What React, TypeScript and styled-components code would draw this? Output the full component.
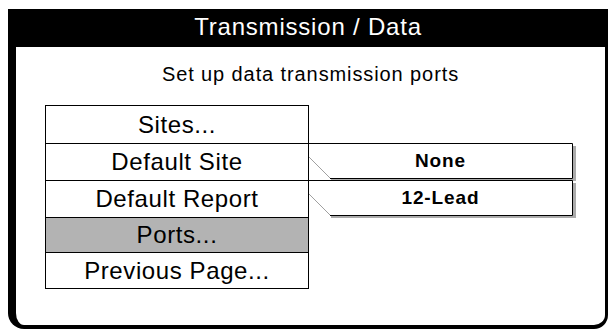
import styled, { createGlobalStyle } from "styled-components";

const GlobalStyle = createGlobalStyle`
  html, body {
    margin: 0;
    padding: 0;
    background: #fff;
  }
  body {
    font-family: "Liberation Sans", Arial, Helvetica, sans-serif;
    color: #000;
  }
`;

type MenuEntry = {
  label: string;
  height: number;
  selected?: boolean;
  value?: string;
};

const entries: MenuEntry[] = [
  { label: "Sites...", height: 39 },
  { label: "Default Site", height: 38, value: "None" },
  { label: "Default Report", height: 38, value: "12-Lead" },
  { label: "Ports...", height: 36, selected: true },
  { label: "Previous Page...", height: 37 },
];

function Callout({ value }: { value: string }) {
  return (
    <CalloutBox>
      <svg width="268" height="38" viewBox="0 0 268 38">
        <rect x="265" y="3" width="3" height="35" fill="#ababab" />
        <rect x="23" y="36" width="245" height="2" fill="#ababab" />
        <path d="M0 0.5H264.5V35.5H22" fill="none" stroke="#000" strokeWidth="1" />
        <path d="M1 14L22 35" fill="none" stroke="#a0a0a0" strokeWidth="1" />
      </svg>
      <CalloutText>{value}</CalloutText>
    </CalloutBox>
  );
}

function App() {
  return (
    <Screen>
      <GlobalStyle />
      <TitleBar>Transmission / Data</TitleBar>
      <Panel>
        <Subtitle>Set up data transmission ports</Subtitle>
        <Menu>
          {entries.map((e, i) => (
            <Row key={e.label} $first={i === 0}>
              <MenuItem $selected={!!e.selected} style={{ height: e.height }}>
                {e.label}
              </MenuItem>
              {e.value && <Callout value={e.value} />}
            </Row>
          ))}
        </Menu>
      </Panel>
    </Screen>
  );
}

const Screen = styled.div`
  width: 600px;
  margin-left: 8px;
  padding-top: 9px;
  display: flex;
  flex-direction: column;
`;

const TitleBar = styled.div`
  height: 38px;
  box-sizing: border-box;
  padding-bottom: 3px;
  background: #000;
  color: #fff;
  display: flex;
  align-items: center;
  justify-content: center;
  font-size: 24px;
  letter-spacing: 0.8px;
`;

const Panel = styled.div`
  height: 282px;
  box-sizing: border-box;
  border-left: 8px solid #000;
  border-right: 3px solid #000;
  border-bottom: 4px solid #000;
  border-radius: 0 0 14px 16px;
  padding-top: 15px;
`;

const Subtitle = styled.div`
  text-align: center;
  font-size: 20px;
  line-height: 24px;
  letter-spacing: 0.9px;
`;

const Menu = styled.div`
  margin-top: 19px;
  margin-left: 29px;
  display: flex;
  flex-direction: column;
`;

const Row = styled.div<{ $first: boolean }>`
  display: flex;
  align-items: flex-start;
  margin-top: ${(p) => (p.$first ? "0" : "-1px")};
`;

const MenuItem = styled.div<{ $selected: boolean }>`
  width: 264px;
  box-sizing: border-box;
  border: 1px solid #000;
  background: ${(p) => (p.$selected ? "#b3b3b3" : "#fff")};
  display: flex;
  align-items: center;
  justify-content: center;
  font-size: 24px;
  letter-spacing: 0.6px;
`;

const CalloutBox = styled.div`
  position: relative;
  width: 268px;
  height: 38px;
  margin-left: -1px;

  svg {
    position: absolute;
    left: 0;
    top: 0;
  }
`;

const CalloutText = styled.div`
  position: relative;
  width: 265px;
  height: 36px;
  display: flex;
  align-items: center;
  justify-content: center;
  font-weight: 700;
  font-size: 19px;
  letter-spacing: 0.9px;
`;

export default App;
